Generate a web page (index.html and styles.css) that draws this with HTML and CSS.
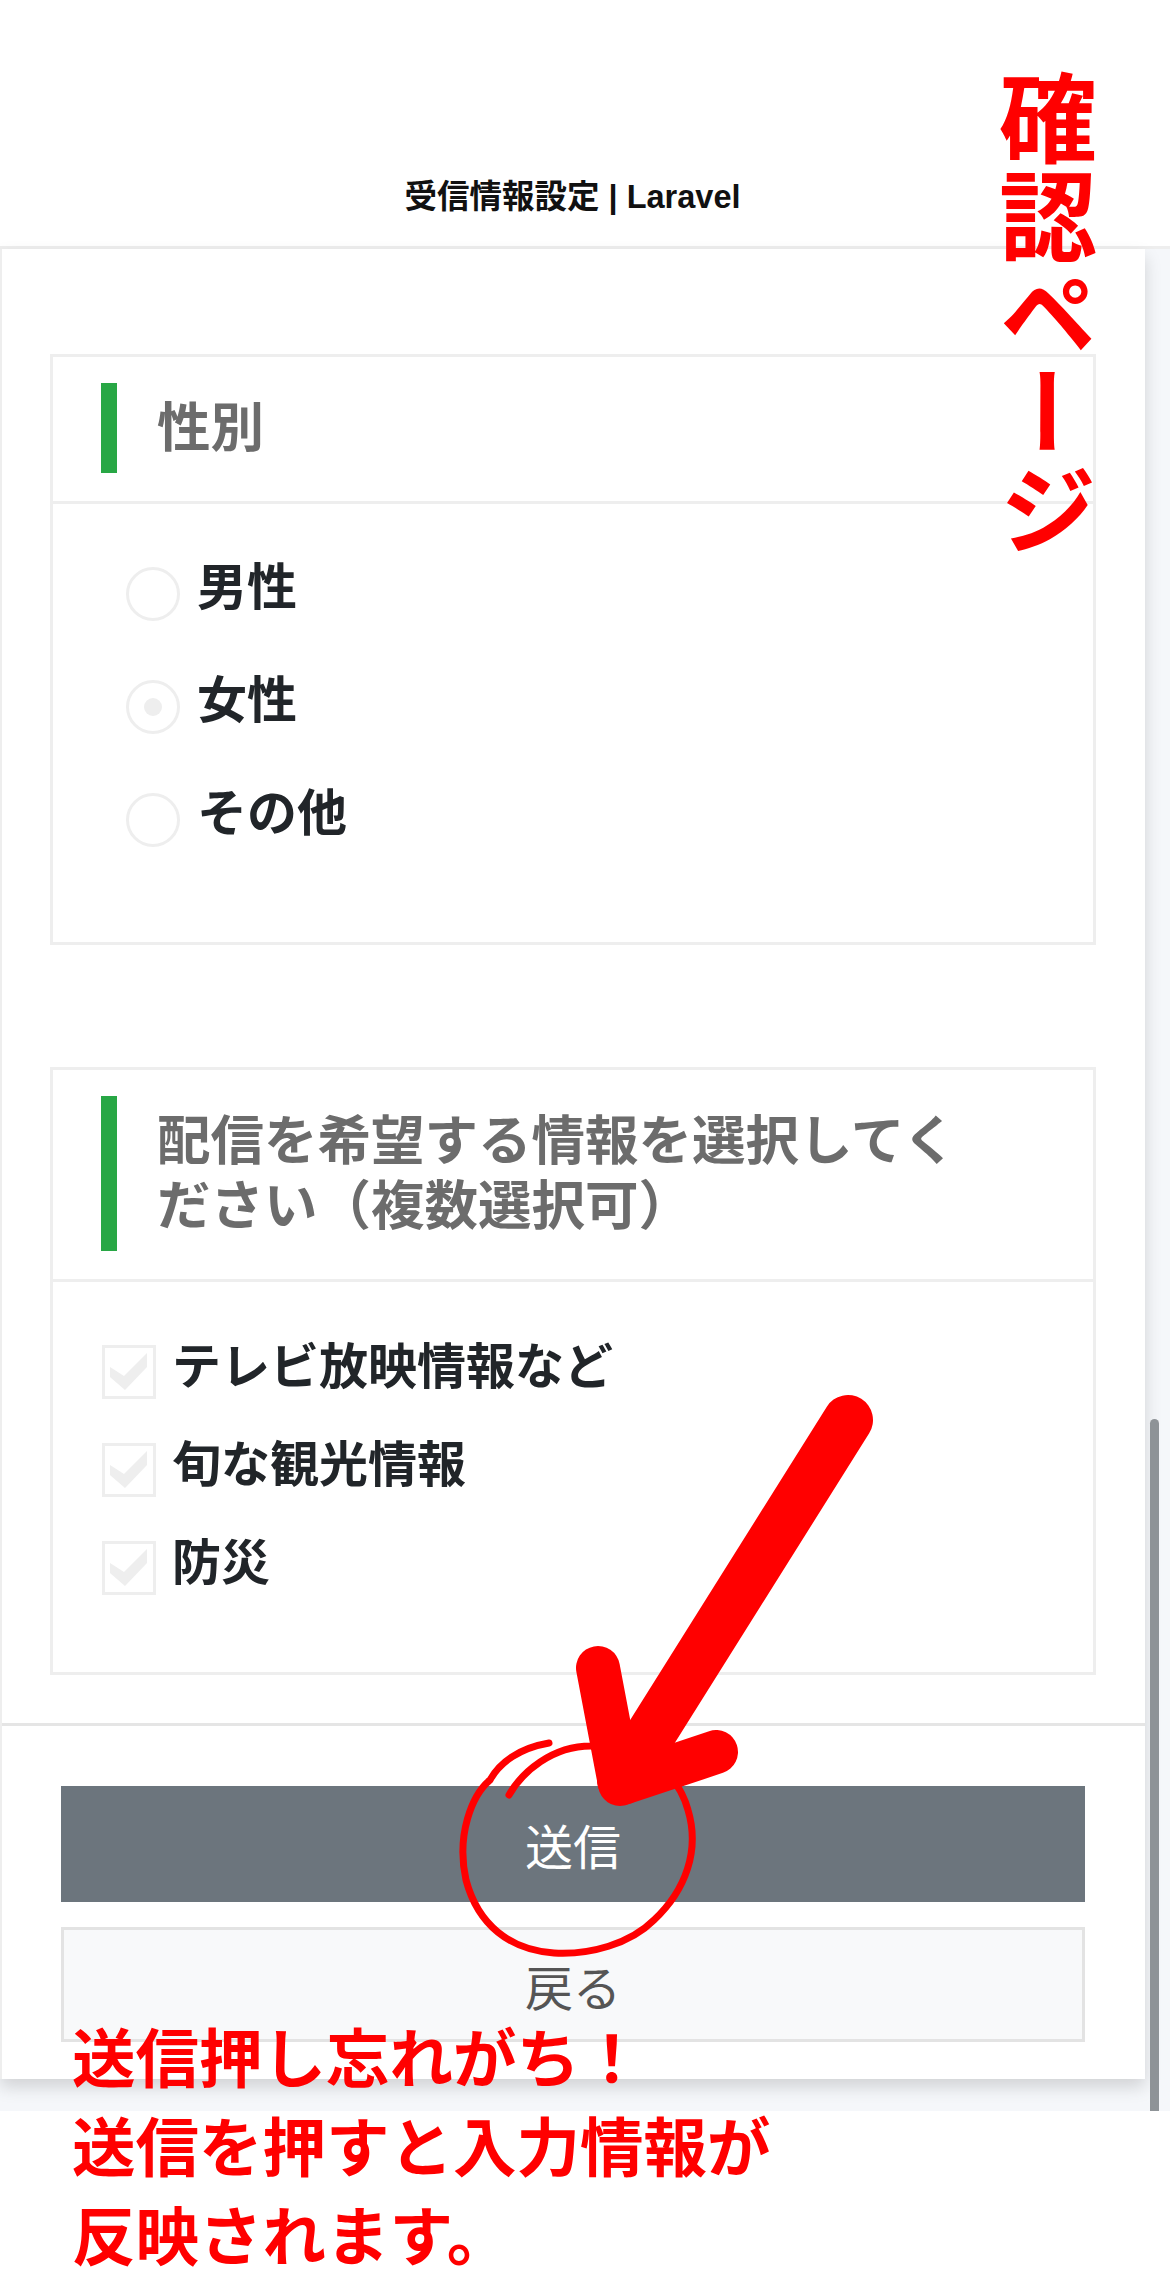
FILE: index.html
```html
<!DOCTYPE html>
<html lang="ja">
<head>
  <meta charset="UTF-8">
  <meta name="viewport" content="width=device-width, initial-scale=1.0">
  <title>受信情報設定 | Laravel</title>
  <link rel="stylesheet" href="styles.css">
</head>
<body>
  <div class="screen">
    <header class="topbar">
      <div class="page-title">受信情報設定 | Laravel</div>
    </header>

    <div class="page">
      <main class="card">
        <form class="form-body">
          <section class="box">
            <div class="box-head"><h3 class="box-title">性別</h3></div>
            <div class="box-body radios">
              <label class="row"><span class="radio"></span>男性</label>
              <label class="row"><span class="radio on"></span>女性</label>
              <label class="row"><span class="radio"></span>その他</label>
            </div>
          </section>

          <section class="box">
            <div class="box-head"><h3 class="box-title">配信を希望する情報を選択してください（複数選択可）</h3></div>
            <div class="box-body checks">
              <label class="row">
                <svg class="check" viewBox="0 0 54 54"><rect x="1.5" y="1.5" width="51" height="51"/><polygon points="8,22 22,31 45,8 45,22 23,45 8,32"/></svg>
                テレビ放映情報など
              </label>
              <label class="row">
                <svg class="check" viewBox="0 0 54 54"><rect x="1.5" y="1.5" width="51" height="51"/><polygon points="8,22 22,31 45,8 45,22 23,45 8,32"/></svg>
                旬な観光情報
              </label>
              <label class="row">
                <svg class="check" viewBox="0 0 54 54"><rect x="1.5" y="1.5" width="51" height="51"/><polygon points="8,22 22,31 45,8 45,22 23,45 8,32"/></svg>
                防災
              </label>
            </div>
          </section>
        </form>

        <div class="actions">
          <button class="btn btn-send" type="button">送信</button>
          <button class="btn btn-back" type="button">戻る</button>
        </div>
      </main>
    </div>
    <div class="scrollbar"></div>

    <!-- red notes drawn on top of the screenshot -->
    <div class="note-side">確認ページ</div>
    <svg class="marks" viewBox="0 0 1170 2289">
      <path class="ring" d="M509 1795 C522 1772 552 1746 591 1746 C640 1744 677 1770 688 1810 C700 1850 686 1890 654 1920 C630 1944 590 1955 554 1953 C510 1950 478 1925 466 1880 C456 1835 472 1795 490 1780 C500 1762 520 1748 549 1743"/>
      <path class="arrow" d="M848 1420 L622 1780"/>
      <path class="arrow-head" d="M598 1668 L620 1784 L716 1752"/>
    </svg>
    <div class="note-bottom">
      <div>送信押し忘れがち！</div>
      <div>送信を押すと入力情報が</div>
      <div>反映されます。</div>
    </div>
  </div>
</body>
</html>
```

FILE: styles.css
```css
* { box-sizing: border-box; }
html, body { margin: 0; padding: 0; background: #fff; }
body { font-family: "Liberation Sans", "Noto Sans CJK JP", sans-serif; color: #212529; }

.screen { position: relative; width: 1170px; height: 2289px; overflow: hidden; background: #fff; }

.topbar { height: 249px; padding: 0 25px 28px 0; display: flex; align-items: flex-end; justify-content: center; border-bottom: 3px solid #eeeeee; }
.page-title { font-size: 32.5px; line-height: 42px; font-weight: 700; color: #111; }

.page { height: 1862px; background: #f5f7fa; }
.card { width: 1145px; height: 1830px; background: #fff; border-left: 2px solid #eeeeee; box-shadow: 0 8px 16px rgba(0,0,0,0.15); }

.form-body { height: 1474px; padding: 105px 49px 0 48px; }
.box { border: 3px solid #eeeeee; margin-bottom: 122px; }
.box-head { padding: 26px 100px 28px 48px; border-bottom: 3px solid #eeeeee; }
.box-title { margin: 0; padding: 12.5px 0 12.5px 40px; border-left: 16px solid #28a745; font-size: 53.5px; line-height: 65px; font-weight: 700; color: #6c6c6c; }

.box-body { display: flex; flex-direction: column; }
.radios { height: 438px; padding: 57px 0 0 73px; gap: 53px; }
.checks { height: 390px; padding: 58px 0 0 49px; gap: 39px; }

.row { display: flex; align-items: flex-start; font-size: 50px; line-height: 54px; font-weight: 700; color: #212529; }
.checks .row { font-size: 49px; }
.radio { position: relative; flex: none; width: 54px; height: 54px; margin: 6px 17px 0 0; border: 3px solid #eeeeee; border-radius: 50%; }
.radio.on::after { content: ""; position: absolute; left: 15px; top: 15px; width: 18px; height: 18px; border-radius: 50%; background: #eeeeee; }
.check { flex: none; width: 54px; height: 54px; margin: 5px 16px 0 0; }
.check rect { fill: #fff; stroke: #eeeeee; stroke-width: 3; }
.check polygon { fill: #eeeeee; }

.actions { padding: 60px 60px 0 59px; border-top: 3px solid #e5e5e5; display: flex; flex-direction: column; gap: 25px; }
.btn { display: block; width: 100%; height: 116px; border-radius: 0; font-family: inherit; font-size: 48px; font-weight: 400; }
.btn-send { border: none; background: #6c757d; color: #fff; }
.btn-back { height: 115px; border: 3px solid #e3e3e3; background: #f8f9fa; color: #555; }

.scrollbar { position: absolute; left: 1150px; top: 1419px; width: 9px; height: 692px; border-radius: 5px 5px 0 0; background: #8e9397; }

.marks { position: absolute; left: 0; top: 0; width: 1170px; height: 2289px; fill: none; }
.ring { stroke: #f00; stroke-width: 7; stroke-linecap: round; }
.arrow { stroke: #f00; stroke-width: 50; stroke-linecap: round; }
.arrow-head { stroke: #f00; stroke-width: 44; stroke-linecap: round; stroke-linejoin: round; }

.note-side { position: absolute; left: 990px; top: 69px; writing-mode: vertical-rl; text-orientation: upright; font-size: 98px; line-height: 98px; font-weight: 700; color: #f00; }
.note-bottom { position: absolute; left: 72px; top: 2016px; font-size: 63.5px; line-height: 89px; font-weight: 700; color: #f00; white-space: nowrap; }
```
